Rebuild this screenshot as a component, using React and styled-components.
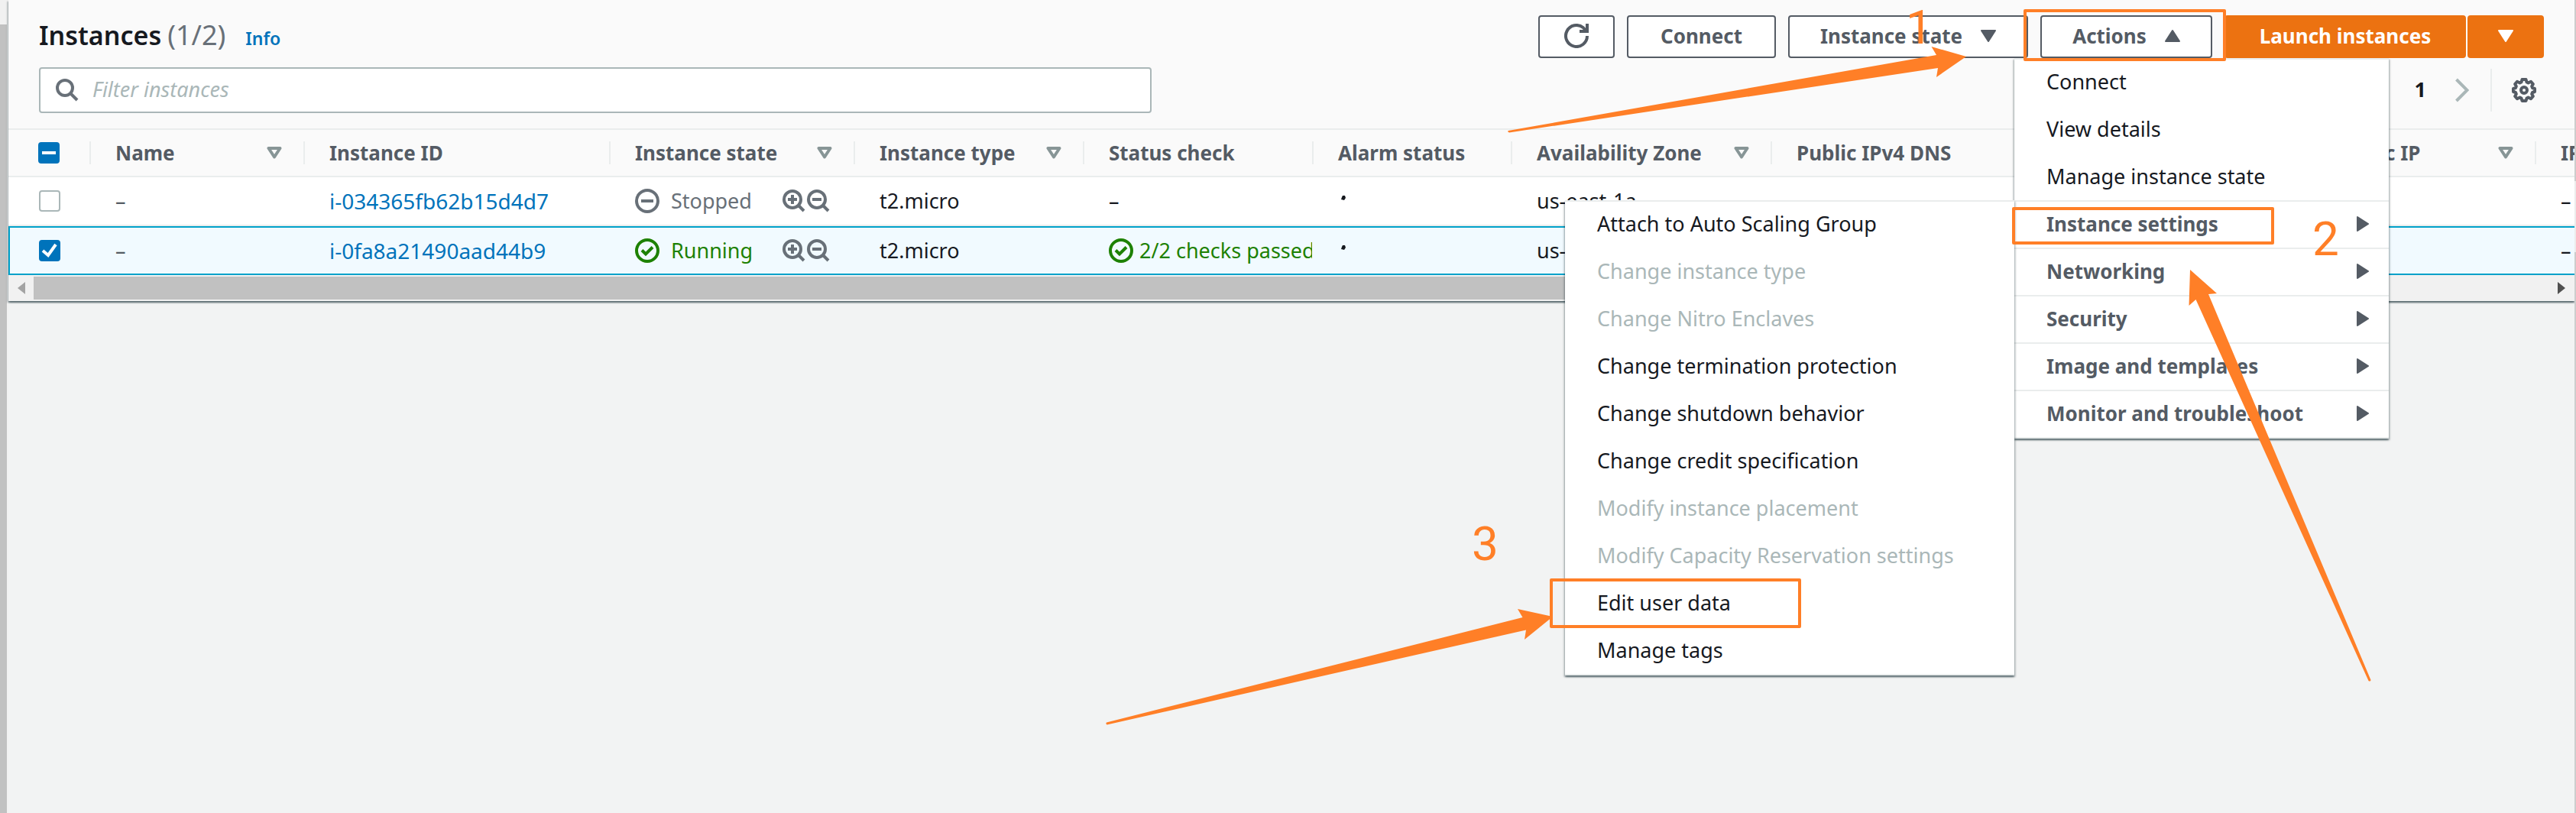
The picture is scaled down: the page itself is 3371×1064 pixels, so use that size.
import React from "react";
import styled, { createGlobalStyle, css } from "styled-components";

const ink = "#16191f";
const slate = "#545b64";
const muted = "#687078";
const line = "#eaeded";
const blue = "#0073bb";
const green = "#1d8102";
const marker = "#ff7f27";

const GlobalStyle = createGlobalStyle`
  *, *::before, *::after { box-sizing: border-box; }
  body {
    margin: 0;
    background: #f2f3f3;
    color: ${ink};
    font-family: "Noto Sans", "Open Sans", sans-serif;
    font-size: 27px;
    line-height: 36px;
  }
  button, input { font: inherit; color: inherit; margin: 0; }
  button { cursor: pointer; }
  ul { list-style: none; margin: 0; padding: 0; }
`;

const Page = styled.div`
  position: relative;
  display: flex;
  min-height: 100vh;
  overflow: hidden;
`;

const raised = css`
  box-shadow: 0 2px 2px 0 rgba(0, 28, 36, 0.5), 2px 2px 2px 0 rgba(0, 28, 36, 0.15),
    -2px 2px 2px 0 rgba(0, 28, 36, 0.15);
`;

/* Scroll bars */
const LeftRail = styled.div`
  flex: 0 0 11px;
  display: flex;
  padding: 32px 2px 0 0;
  background: #f1f1f1;
`;
const RightRail = styled.div`
  flex: 0 0 2px;
  display: flex;
  flex-direction: column;
  gap: 93px;
  background: #ececec;
`;
const RailThumb = styled.div`
  flex: ${(p) => (p.$height ? `0 0 ${p.$height}px` : "1")};
  background: ${(p) => p.$color};
`;
const TableScroll = styled.div`
  display: flex;
  align-items: center;
  gap: 11px;
  height: 34px;
  padding: 0 12px;
  background: #f1f1f1;
`;
const TableScrollThumb = styled.div`
  flex: 0 0 78%;
  height: 30px;
  background: #c1c1c1;
`;
const ScrollEnd = styled.svg`
  flex: none;
  width: 10px;
  height: 16px;
  margin-left: ${(p) => (p.$last ? "auto" : "0")};
  fill: ${(p) => (p.$last ? "#505050" : "#a3a3a3")};
`;

/* Panel header */
const Panel = styled.main`
  flex: 1;
  min-width: 0;
`;
const Card = styled.section`
  background: #fafafa;
  ${raised}
`;
const Header = styled.header`
  display: flex;
  flex-direction: column;
  gap: 12px;
  padding: 20px 40px;
`;
const HeaderRow = styled.div`
  display: flex;
  align-items: center;
  justify-content: space-between;
`;
const TitleGroup = styled.div`
  display: flex;
  align-items: baseline;
  padding-bottom: 4px;
`;
const Title = styled.h1`
  display: flex;
  align-items: baseline;
  gap: 8px;
  margin: 0 26px 0 0;
  font-size: 34px;
  line-height: 44px;
  font-weight: 600;
`;
const Count = styled.span`
  color: ${muted};
  font-size: 36px;
  font-weight: 400;
`;
const InfoLink = styled.a`
  color: ${blue};
  font-size: ${(p) => (p.$small ? 23 : 28)}px;
  font-weight: 600;
  text-decoration: none;
`;
const Actions = styled.div`
  display: flex;
  gap: 16px;
`;
const SplitButton = styled.div`
  display: flex;
  gap: 2px;
`;
const Button = styled.button`
  display: flex;
  align-items: center;
  justify-content: center;
  gap: 24px;
  width: ${(p) => p.$width}px;
  height: 56px;
  padding: 0 0 2px;
  border: 2px solid ${(p) => (p.$primary ? "#ec7211" : slate)};
  border-radius: 4px;
  background: ${(p) => (p.$primary ? "#ec7211" : "#fff")};
  color: ${(p) => (p.$primary ? "#fff" : slate)};
  font-size: 26px;
  font-weight: 700;
  white-space: nowrap;
`;
const Search = styled.label`
  flex: 0 1 1456px;
  display: flex;
  align-items: center;
  gap: 18px;
  height: 60px;
  padding: 0 20px;
  border: 2px solid #aab7b8;
  border-radius: 4px;
  background: #fff;
`;
const SearchInput = styled.input`
  flex: 1;
  min-width: 0;
  border: 0;
  padding: 0 0 2px;
  outline: 0;
  background: none;
  font-size: 27px;
  &::placeholder {
    color: #aab7b8;
    opacity: 1;
    font-style: italic;
  }
`;
const Pager = styled.nav`
  display: flex;
  align-items: center;
  padding-right: 10px;
`;
const PageNumber = styled.button`
  padding: 0 38px 2px;
  border: 0;
  background: none;
  font-weight: 700;
`;
const IconButton = styled.button`
  display: flex;
  padding: 0;
  border: 0;
  background: none;
`;
const PagerDivider = styled.span`
  width: 2px;
  height: 56px;
  margin: 0 26px 0 28px;
  background: ${line};
`;

/* Drop-down menus */
const MenuAnchor = styled.div`
  position: relative;
`;
const Menu = styled.ul`
  position: absolute;
  z-index: 2;
  top: 100%;
  left: -34px;
  width: 490px;
  background: #fff;
  border-bottom: 2px solid ${line};
  ${raised}
`;
const SubMenu = styled(Menu)`
  top: -2px;
  left: auto;
  right: 100%;
  width: 588px;
`;
const MenuItem = styled.li`
  position: relative;
  border-top: 2px solid ${(p) => (p.$ruled ? line : "transparent")};
`;
const MenuButton = styled.button`
  display: flex;
  align-items: center;
  justify-content: space-between;
  width: 100%;
  height: 60px;
  padding: 0 24px 2px 42px;
  border: 0;
  background: none;
  text-align: left;
  white-space: nowrap;
  color: ${(p) => (p.$group ? slate : ink)};
  font-size: ${(p) => (p.$group ? 26 : 27)}px;
  font-weight: ${(p) => (p.$group ? 700 : 400)};
  &:disabled {
    color: #aab7b8;
    cursor: default;
  }
`;

/* Table */
const TableClip = styled.div`
  overflow: hidden;
`;
const Table = styled.table`
  table-layout: fixed;
  width: 3766px;
  border-collapse: separate;
  border-spacing: 0;
`;
const HeadCell = styled.th`
  height: 64px;
  padding: 0;
  border: solid ${line};
  border-width: 2px 0;
  text-align: left;
  color: ${slate};
  font-size: 26px;
  font-weight: 700;
`;
const HeadInner = styled.div`
  display: flex;
  align-items: center;
  justify-content: space-between;
  height: 30px;
  padding: 0 28px 0 32px;
  border-left: 2px solid ${line};
  line-height: 28px;
  white-space: nowrap;
`;
const Row = styled.tr`
  background: ${(p) => (p.$selected ? "#f1faff" : "#fff")};
  & > td {
    border: solid ${(p) => (p.$selected ? "#00a1c9" : line)};
    border-width: ${(p) => (p.$selected ? "2px 0" : "0 0 2px")};
  }
  & > td:first-child {
    border-left-width: ${(p) => (p.$selected ? "2px" : "0")};
  }
`;
const Cell = styled.td`
  height: 64px;
  padding: 0 0 0 34px;
  overflow: hidden;
  white-space: nowrap;
  color: ${(p) => p.$color || ink};
`;
const CheckHead = styled(HeadCell)`
  padding-left: 39px;
`;
const CheckCell = styled(Cell)`
  padding-left: ${(p) => (p.$selected ? 38 : 40)}px;
`;
const IdLink = styled.a`
  color: ${blue};
  font-size: 28px;
  text-decoration: none;
`;
const Status = styled.span`
  display: flex;
  align-items: center;
  gap: ${(p) => p.$gap}px;
  color: ${(p) => p.$color};
`;
const StateLayout = styled.div`
  display: grid;
  grid-template-columns: 193px auto;
  align-items: center;
`;
const ZoomPair = styled.span`
  display: flex;
  gap: 2px;
`;

const CheckBox = styled.span`
  position: relative;
  display: flex;
  width: 28px;
  height: 28px;
`;
const CheckInput = styled.input`
  appearance: none;
  width: 28px;
  height: 28px;
  border: 2px solid ${(p) => (p.$filled ? blue : "#aab7b8")};
  border-radius: 4px;
  background: ${(p) => (p.$filled ? blue : "#fff")};
`;
const CheckGlyph = styled.svg`
  position: absolute;
  inset: 0;
  width: 28px;
  height: 28px;
  pointer-events: none;
  fill: none;
  stroke: #fff;
  stroke-width: 4;
`;

/* Walkthrough marks laid over the page */
const Overlay = styled.div`
  position: absolute;
  z-index: 5;
  top: 0;
  right: 0;
  width: 3371px;
  height: 1064px;
  pointer-events: none;
`;
const Arrows = styled.svg`
  display: block;
  width: 100%;
  height: 100%;
  fill: ${marker};
`;
const Frame = styled.div`
  position: absolute;
  left: ${(p) => p.$x}px;
  top: ${(p) => p.$y}px;
  width: ${(p) => p.$w}px;
  height: ${(p) => p.$h}px;
  border: 4px solid ${marker};
  border-radius: 2px;
`;
const Step = styled.span`
  position: absolute;
  left: ${(p) => p.$x}px;
  top: ${(p) => p.$y}px;
  color: ${marker};
  font-family: Roboto, "Liberation Sans", sans-serif;
  font-size: 62px;
  line-height: 62px;
  font-weight: 400;
`;

/* Icons */
const Svg = styled.svg`
  flex: none;
  display: block;
`;
const Caret = ({ up, right }) => {
  const turn = up ? 180 : right ? -90 : 0;
  return (
    <Svg width="20" height="20" viewBox="0 0 20 20" aria-hidden="true">
      <path
        transform={`rotate(${turn} 10 10)`}
        d="M1 3h18l-9 14z"
        fill="currentColor"
        stroke="currentColor"
        strokeWidth="2"
        strokeLinejoin="round"
      />
    </Svg>
  );
};
const SortIcon = () => (
  <Svg width="20" height="16" viewBox="0 0 20 16" aria-hidden="true">
    <path d="M2.5 2h15L10 13.500z" fill="none" stroke="#879596" strokeWidth="4" strokeLinejoin="round" />
  </Svg>
);
const RefreshIcon = () => (
  <Svg width="32" height="32" viewBox="0 0 32 32" fill="none" stroke="currentColor" strokeWidth="4" aria-hidden="true">
    <path d="M30 16a14 14 0 1 1-5-10.700l4 4.700" />
    <path d="M30 0v10H20" />
  </Svg>
);
const SearchIcon = () => (
  <Svg width="30" height="30" viewBox="0 0 30 30" fill="none" stroke={muted} strokeWidth="4" aria-hidden="true">
    <circle cx="12" cy="12" r="10" />
    <path d="M19 19l9 9" />
  </Svg>
);
const ZoomIcon = ({ plus }) => (
  <Svg width="30" height="30" viewBox="0 0 30 30" fill="none" stroke={muted} strokeWidth="4" aria-hidden="true">
    <circle cx="13" cy="13" r="11" />
    <path d="M20 20l8 8M7 13h12" />
    {plus && <path d="M13 7v12" />}
  </Svg>
);
const StatusIcon = ({ ok }) => (
  <Svg width="32" height="32" viewBox="0 0 32 32" fill="none" stroke="currentColor" strokeWidth="4" aria-hidden="true">
    <circle cx="16" cy="16" r="14" />
    {ok ? <path d="M9 15.500l5 5L23 11.500" /> : <path d="M8 16h16" />}
  </Svg>
);
const ChevronIcon = () => (
  <Svg width="18" height="32" viewBox="0 0 18 32" fill="none" stroke="#aab7b8" strokeWidth="4" aria-hidden="true">
    <path d="M1.500 2l14 14-14 14" />
  </Svg>
);
const GearIcon = () => (
  <Svg width="32" height="32" viewBox="0 0 32 32" fill="none" stroke={slate} strokeWidth="4" strokeLinejoin="round" aria-hidden="true">
    <path d="M13.500 2h5l1 3.500 2 1 3.500-1.800 2.800 3.300-1.600 3 .8 2 3 1v4l-3 1-.8 2 1.600 3-2.800 3.300-3.500-1.800-2 1-1 3.500h-5l-1-3.500-2-1L7 27.300 4.200 24l1.600-3-.8-2-3-1v-4l3-1 .8-2-1.600-3L7 4.700l3.500 1.800 2-1z" />
    <circle cx="16" cy="16" r="4" />
  </Svg>
);
const AlarmMark = () => (
  <Svg width="14" height="18" viewBox="0 0 14 18" aria-hidden="true">
    <path d="M6 2h3l1 3-2 3-4-1 1-3z" fill={ink} />
  </Svg>
);

function Check({ label, state }) {
  const filled = state !== "off";
  return (
    <CheckBox>
      <CheckInput type="checkbox" aria-label={label} defaultChecked={state === "on"} $filled={filled} />
      <CheckGlyph viewBox="0 0 28 28" aria-hidden="true">
        {state === "mixed" && <path d="M5 14h18" />}
        {state === "on" && <path d="M5 14l7 6L22 6" />}
      </CheckGlyph>
    </CheckBox>
  );
}

const columns = [
  { title: "Name", width: 280, sort: true },
  { title: "Instance ID", width: 400 },
  { title: "Instance state", width: 320, sort: true },
  { title: "Instance type", width: 300, sort: true },
  { title: "Status check", width: 300 },
  { title: "Alarm status", width: 260 },
  { title: "Availability Zone", width: 340, sort: true },
  { title: "Public IPv4 DNS", width: 350 },
  { title: "Public IPv4 …", width: 350, sort: true },
  { title: "Elastic IP", width: 300, sort: true },
  { title: "IPv6 IPs", width: 460 },
];

const instances = [
  { id: "i-034365fb62b15d4d7", running: false, type: "t2.micro", checks: null, zone: "us-east-1a" },
  { id: "i-0fa8a21490aad44b9", running: true, type: "t2.micro", checks: "2/2 checks passed", zone: "us-east-1a", selected: true },
];

const settings = [
  ["Attach to Auto Scaling Group", true],
  ["Change instance type", false],
  ["Change Nitro Enclaves", false],
  ["Change termination protection", true],
  ["Change shutdown behavior", true],
  ["Change credit specification", true],
  ["Modify instance placement", false],
  ["Modify Capacity Reservation settings", false],
  ["Edit user data", true],
  ["Manage tags", true],
];

const groups = ["Instance settings", "Networking", "Security", "Image and templates", "Monitor and troubleshoot"];

function ActionsMenu() {
  return (
    <Menu>
      {["Connect", "View details", "Manage instance state"].map((name, i) => (
        <MenuItem key={name} $ruled={i === 0}>
          <MenuButton>{name}</MenuButton>
        </MenuItem>
      ))}
      {groups.map((name, i) => (
        <MenuItem key={name} $ruled>
          <MenuButton $group>
            {name}
            <Caret right />
          </MenuButton>
          {i === 0 && (
            <SubMenu>
              {settings.map(([label, enabled], n) => (
                <MenuItem key={label} $ruled={n === 0}>
                  <MenuButton disabled={!enabled}>{label}</MenuButton>
                </MenuItem>
              ))}
            </SubMenu>
          )}
        </MenuItem>
      ))}
    </Menu>
  );
}

function InstanceRow({ item }) {
  const color = item.running ? green : muted;
  return (
    <Row $selected={item.selected}>
      <CheckCell $selected={item.selected}>
        <Check label={`Select ${item.id}`} state={item.selected ? "on" : "off"} />
      </CheckCell>
      <Cell $color={slate}>–</Cell>
      <Cell>
        <IdLink href="#">{item.id}</IdLink>
      </Cell>
      <Cell>
        <StateLayout>
          <Status $color={color} $gap={15}>
            <StatusIcon ok={item.running} />
            {item.running ? "Running" : "Stopped"}
          </Status>
          <ZoomPair>
            <ZoomIcon plus />
            <ZoomIcon />
          </ZoomPair>
        </StateLayout>
      </Cell>
      <Cell>{item.type}</Cell>
      <Cell>
        {item.checks ? (
          <Status $color={green} $gap={8}>
            <StatusIcon ok />
            {item.checks}
          </Status>
        ) : (
          "–"
        )}
      </Cell>
      <Cell>
        <AlarmMark />
      </Cell>
      <Cell>{item.zone}</Cell>
      <Cell>–</Cell>
      <Cell>–</Cell>
      <Cell>–</Cell>
      <Cell>–</Cell>
    </Row>
  );
}

export default function App() {
  return (
    <Page>
      <GlobalStyle />
      <LeftRail>
        <RailThumb $color="#c1c1c1" />
      </LeftRail>
      <Panel>
        <Card>
          <Header>
            <HeaderRow>
              <TitleGroup>
                <Title>
                  Instances <Count>(1/2)</Count>
                </Title>
                <InfoLink href="#" $small>
                  Info
                </InfoLink>
              </TitleGroup>
              <Actions>
                <Button $width={100} aria-label="Refresh">
                  <RefreshIcon />
                </Button>
                <Button $width={195}>Connect</Button>
                <Button $width={314}>
                  Instance state
                  <Caret />
                </Button>
                <MenuAnchor>
                  <Button $width={225} aria-expanded="true">
                    Actions
                    <Caret up />
                  </Button>
                  <ActionsMenu />
                </MenuAnchor>
                <SplitButton>
                  <Button $width={316} $primary>
                    Launch instances
                  </Button>
                  <Button $width={100} $primary aria-label="More launch options">
                    <Caret />
                  </Button>
                </SplitButton>
              </Actions>
            </HeaderRow>
            <HeaderRow>
              <Search>
                <SearchIcon />
                <SearchInput type="text" placeholder="Filter instances" aria-label="Filter instances" />
              </Search>
              <Pager aria-label="Pages">
                <PageNumber>1</PageNumber>
                <IconButton aria-label="Next page">
                  <ChevronIcon />
                </IconButton>
                <PagerDivider />
                <IconButton aria-label="Preferences">
                  <GearIcon />
                </IconButton>
              </Pager>
            </HeaderRow>
          </Header>
          <TableClip>
            <Table>
              <colgroup>
                <col width="106" />
                {columns.map((c) => (
                  <col key={c.title} width={c.width} />
                ))}
              </colgroup>
              <thead>
                <tr>
                  <CheckHead>
                    <Check label="Select all instances" state="mixed" />
                  </CheckHead>
                  {columns.map((c) => (
                    <HeadCell key={c.title}>
                      <HeadInner>
                        {c.title}
                        {c.sort && <SortIcon />}
                      </HeadInner>
                    </HeadCell>
                  ))}
                </tr>
              </thead>
              <tbody>
                {instances.map((item) => (
                  <InstanceRow key={item.id} item={item} />
                ))}
              </tbody>
            </Table>
          </TableClip>
          <TableScroll>
            <ScrollEnd viewBox="0 0 10 16">
              <path d="M10 0v16L0 8z" />
            </ScrollEnd>
            <TableScrollThumb />
            <ScrollEnd $last viewBox="0 0 10 16">
              <path d="M0 0v16l10-8z" />
            </ScrollEnd>
          </TableScroll>
        </Card>
      </Panel>
      <RightRail>
        <RailThumb $height={237} $color="#cdcdcd" />
        <RailThumb $color="#cdcdcd" />
      </RightRail>
      <Overlay>
        <Arrows viewBox="0 0 3371 1064" aria-hidden="true">
          <path d="M1974 171L2534 72l-6.500-11L2573 74l-39 27 2-12-561 84.500q-3-1-1-2.500z" />
          <path d="M2866 353l35 31-11 1 212.500 505q-.5 2.500-3 1L2873.500 392l-9 8z" />
          <path d="M1448 945.500L1992.500 808 1986 797l46 10-37 30 2-12.500L1448.500 948.500q-2-1.500-.5-3z" />
        </Arrows>
        <Frame $x={2648} $y={12} $w={265} $h={68} />
        <Frame $x={2633} $y={271} $w={343} $h={49} />
        <Frame $x={2028} $y={757} $w={329} $h={65} />
        <Step $x={2494} $y={5}>1</Step>
        <Step $x={3026} $y={282}>2</Step>
        <Step $x={1926} $y={681}>3</Step>
      </Overlay>
    </Page>
  );
}
